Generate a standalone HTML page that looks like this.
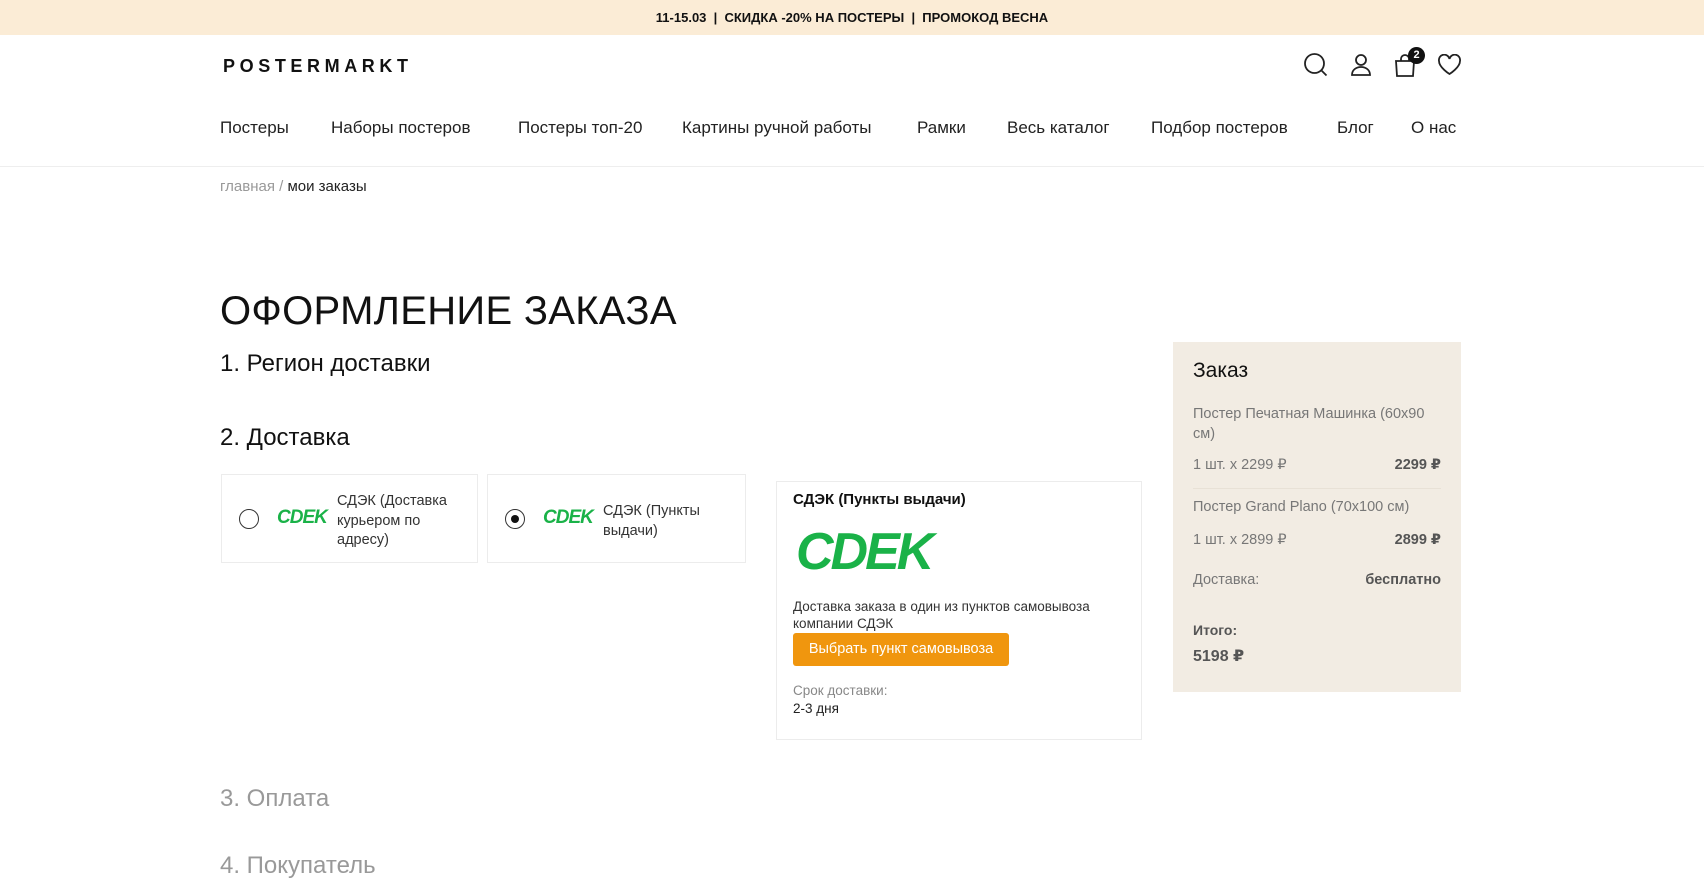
<!DOCTYPE html>
<html><head><meta charset="utf-8"><style>
*{margin:0;padding:0;box-sizing:border-box}
body{width:1704px;height:890px;overflow:hidden;background:#fff;font-family:"Liberation Sans","DejaVu Sans",sans-serif;color:#111;position:relative}
.a{position:absolute;white-space:nowrap}
.top{position:absolute;left:0;top:0;width:1704px;height:35px;background:#fbecd6;text-align:center;font-size:13px;font-weight:bold;line-height:35px}
.nav span{position:absolute;top:118px;font-size:17px;color:#222}
.box{position:absolute;border:1px solid #ececec;background:#fff}
.cdek{font-weight:bold;font-style:italic;color:#1ab248;letter-spacing:-1px}
.radio{position:absolute;width:20px;height:20px;border:1.5px solid #333;border-radius:50%}
.p{font-size:14.5px;color:#777}
.b{font-size:14.5px;font-weight:bold;color:#555}
</style></head><body>
<div class="top">11-15.03 &nbsp;|&nbsp; СКИДКА -20% НА ПОСТЕРЫ &nbsp;|&nbsp; ПРОМОКОД ВЕСНА</div>
<div class="a" style="left:223px;top:56px;font-size:18px;font-weight:bold;letter-spacing:4.6px">POSTERMARKT</div>
<svg class="a" style="left:1303px;top:52px" width="26" height="26" viewBox="0 0 26 26" fill="none" stroke="#222" stroke-width="1.8"><circle cx="11.5" cy="11.5" r="9.5"/><path d="M18.5 18.5l5 5"/></svg>
<svg class="a" style="left:1350px;top:53px" width="22" height="24" viewBox="0 0 22 24" fill="none" stroke="#222" stroke-width="1.8"><circle cx="11" cy="7" r="5"/><path d="M2 22c0-5 4-8 9-8s9 3 9 8z"/></svg>
<svg class="a" style="left:1393px;top:52px" width="24" height="26" viewBox="0 0 24 26" fill="none" stroke="#222" stroke-width="1.8"><path d="M3 9h18l-1 15H4z"/><path d="M8 9V7a4 4 0 0 1 8 0v2"/></svg>
<div class="a" style="left:1408px;top:47px;width:17px;height:17px;border-radius:50%;background:#111;color:#fff;font-size:11px;font-weight:bold;text-align:center;line-height:17px">2</div>
<svg class="a" style="left:1437px;top:54px" width="25" height="22" viewBox="0 0 25 22" fill="none" stroke="#222" stroke-width="1.8"><path d="M12.5 20S2 13.5 2 7a5 5 0 0 1 10.5-2A5 5 0 0 1 23 7c0 6.5-10.5 13-10.5 13z"/></svg>
<div class="nav">
<span style="left:220px">Постеры</span><span style="left:331px">Наборы постеров</span><span style="left:518px">Постеры топ-20</span><span style="left:682px">Картины ручной работы</span><span style="left:917px">Рамки</span><span style="left:1007px">Весь каталог</span><span style="left:1151px">Подбор постеров</span><span style="left:1337px">Блог</span><span style="left:1411px">О нас</span>
</div>
<div class="a" style="left:0;top:166px;width:1704px;height:1px;background:#eee"></div>
<div class="a" style="left:220px;top:178px;font-size:15px;color:#999">главная <span style="color:#999">/</span> <span style="color:#222">мои заказы</span></div>
<div class="a" style="left:220px;top:289px;font-size:40px;letter-spacing:0.3px">ОФОРМЛЕНИЕ ЗАКАЗА</div>
<div class="a" style="left:220px;top:350px;font-size:24px">1. Регион доставки</div>
<div class="a" style="left:220px;top:424px;font-size:24px">2. Доставка</div>
<div class="box" style="left:221px;top:474px;width:257px;height:89px">
<div class="radio" style="left:17px;top:34px"></div>
<div class="a cdek" style="left:55px;top:32px;font-size:19px">CDEK</div>
<div class="a" style="left:115px;top:17px;font-size:14.5px;line-height:19.5px;color:#333;white-space:normal;width:135px">СДЭК (Доставка курьером по адресу)</div>
</div>
<div class="box" style="left:487px;top:474px;width:259px;height:89px">
<div class="radio" style="left:17px;top:34px"></div>
<div class="a" style="left:23px;top:40px;width:8px;height:8px;border-radius:50%;background:#111"></div>
<div class="a cdek" style="left:55px;top:32px;font-size:19px">CDEK</div>
<div class="a" style="left:115px;top:27px;font-size:14.5px;line-height:19.5px;color:#333;white-space:normal;width:120px">СДЭК (Пункты выдачи)</div>
</div>
<div class="box" style="left:776px;top:481px;width:366px;height:259px">
<div class="a" style="left:16px;top:9px;font-size:15px;font-weight:bold">СДЭК (Пункты выдачи)</div>
<div class="a cdek" style="left:19px;top:40px;font-size:52px;letter-spacing:-3px">CDEK</div>
<div class="a" style="left:16px;top:116px;font-size:13.5px;line-height:17px;color:#333">Доставка заказа в один из пунктов самовывоза<br>компании СДЭК</div>
<div class="a" style="left:16px;top:151px;width:216px;height:33px;background:#f0960e;border-radius:3px;color:#fff;font-size:14.5px;line-height:33px;text-align:center">Выбрать пункт самовывоза</div>
<div class="a" style="left:16px;top:201px;font-size:13.5px;color:#888">Срок доставки:</div>
<div class="a" style="left:16px;top:219px;font-size:13.5px;color:#222">2-3 дня</div>
</div>
<div class="a" style="left:220px;top:785px;font-size:24px;color:#999">3. Оплата</div>
<div class="a" style="left:220px;top:852px;font-size:24px;color:#999">4. Покупатель</div>
<div class="a" style="left:1173px;top:342px;width:288px;height:350px;background:#f2ece3">
<div class="a" style="left:20px;top:17px;font-size:21px;color:#111">Заказ</div>
<div class="a p" style="left:20px;top:62px;line-height:20px;white-space:normal;width:250px">Постер Печатная Машинка (60х90 см)</div>
<div class="a p" style="left:20px;top:115px">1 шт. х 2299 ₽</div>
<div class="a b" style="right:20px;top:115px">2299 ₽</div>
<div class="a" style="left:20px;top:146px;width:248px;height:1px;background:#e8e1d6"></div>
<div class="a p" style="left:20px;top:157px">Постер Grand Plano (70х100 см)</div>
<div class="a p" style="left:20px;top:190px">1 шт. х 2899 ₽</div>
<div class="a b" style="right:20px;top:190px">2899 ₽</div>
<div class="a p" style="left:20px;top:230px">Доставка:</div>
<div class="a b" style="right:20px;top:230px">бесплатно</div>
<div class="a b" style="left:20px;top:280px;font-size:14px">Итого:</div>
<div class="a b" style="left:20px;top:304px;font-size:16px">5198 ₽</div>
</div>
</body></html>
